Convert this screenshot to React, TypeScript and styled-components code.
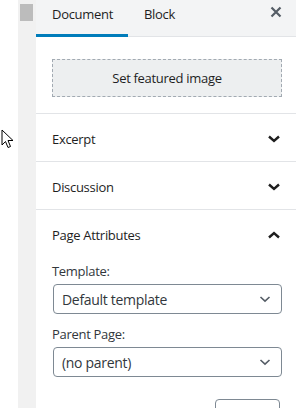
import React from "react";
import styled, { createGlobalStyle } from "styled-components";

const Global = createGlobalStyle`
  html, body { margin: 0; padding: 0; background: #fff; }
  body { width: 296px; height: 408px; overflow: hidden; font-family: "Open Sans", "Noto Sans", sans-serif; color: #1e1e1e; }
  * { box-sizing: border-box; }
`;

const Page = styled.div`
  display: flex;
  width: 296px;
  height: 408px;
  overflow: hidden;
  position: relative;
`;

const Gutter = styled.div`
  width: 18px;
  flex: none;
  background: #fff;
`;

const Strip = styled.div`
  width: 18px;
  flex: none;
  background: #f1f1f1;
  padding: 4px 3px 0 2px;
`;

const Thumb = styled.div`
  width: 13px;
  height: 17px;
  background: #bcbcbc;
`;

const Panel = styled.div`
  flex: 1;
  display: flex;
  flex-direction: column;
  background: #fff;
  min-width: 0;
`;

const Header = styled.div`
  height: 37px;
  flex: none;
  display: flex;
  align-items: stretch;
  background: #f3f4f5;
  border-bottom: 1px solid #e2e4e7;
`;

const Tab = styled.div<{ $active?: boolean }>`
  display: flex;
  align-items: center;
  padding: 0 15px 6px 16px;
  width: ${(p) => (p.$active ? "92px" : "auto")};
  font-size: 13px;
  color: #1e1e1e;
  border-bottom: 3px solid ${(p) => (p.$active ? "#007cba" : "transparent")};
  margin-bottom: -1px;
  letter-spacing: -0.3px;
`;

const Spacer = styled.div`
  flex: 1;
`;

const Close = styled.div`
  width: 38px;
  display: flex;
  align-items: center;
  justify-content: center;
  padding: 0 2px 12px 0;
`;

const Section = styled.div`
  border-bottom: 1px solid #e2e4e7;
`;

const FeaturedBody = styled.div`
  padding: 22px 14px 16px 16px;
`;

const DashedButton = styled.div`
  height: 38px;
  border: 1px dashed #a2aab2;
  background: #edeff0;
  display: flex;
  align-items: center;
  justify-content: center;
  font-size: 13px;
  letter-spacing: -0.3px;
  color: #1e1e1e;
`;

const SectionHead = styled.div`
  height: 47px;
  display: flex;
  align-items: center;
  justify-content: space-between;
  padding: 2px 15px 0 16px;
  font-size: 13px;
  letter-spacing: -0.3px;
  color: #1e1e1e;
`;

const Body = styled.div`
  padding: 5px 14px 0 16px;
  display: flex;
  flex-direction: column;
`;

const Label = styled.div`
  font-size: 13px;
  letter-spacing: -0.3px;
  color: #32373c;
  line-height: 18px;
  margin-bottom: 4px;
`;

const Select = styled.div`
  height: 30px;
  border: 1px solid #7e8993;
  border-radius: 4px;
  margin-left: 1px;
  display: flex;
  align-items: center;
  justify-content: space-between;
  padding: 0 9px 0 8px;
  font-size: 14px;
  letter-spacing: -0.3px;
  color: #32373c;
  margin-bottom: 11px;
`;

const ButtonRow = styled.div`
  display: flex;
  justify-content: flex-end;
  padding-right: 2px;
  margin-top: 11px;
`;

const SmallButton = styled.div`
  width: 65px;
  height: 30px;
  border: 1px solid #7e8993;
  border-radius: 4px;
`;

const Cursor = styled.svg`
  position: absolute;
  left: 1px;
  top: 129px;
`;

const ChevronDown = ({ thin }: { thin?: boolean }) => (
  <svg width="14" height="10" viewBox="0 0 14 10">
    <path
      d={thin ? "M2.5 3 L7 7.2 L11.5 3" : "M2 2.5 L7 7 L12 2.5"}
      fill="none"
      stroke={thin ? "#555d66" : "#1e1e1e"}
      strokeWidth={thin ? 1.6 : 2.4}
    />
  </svg>
);

const ChevronUp = () => (
  <svg width="14" height="10" viewBox="0 0 14 10">
    <path d="M2 7.5 L7 3 L12 7.5" fill="none" stroke="#1e1e1e" strokeWidth={2.4} />
  </svg>
);

export default function App() {
  return (
    <>
      <Global />
      <Page>
        <Gutter />
        <Strip>
          <Thumb />
        </Strip>
        <Panel>
          <Header>
            <Tab $active>Document</Tab>
            <Tab>Block</Tab>
            <Spacer />
            <Close>
              <svg width="12" height="12" viewBox="0 0 12 12">
                <path d="M1.5 1.5 L10.5 10.5 M10.5 1.5 L1.5 10.5" stroke="#555d66" strokeWidth="2.2" />
              </svg>
            </Close>
          </Header>
          <Section>
            <FeaturedBody>
              <DashedButton>Set featured image</DashedButton>
            </FeaturedBody>
          </Section>
          <Section>
            <SectionHead>
              Excerpt
              <ChevronDown />
            </SectionHead>
          </Section>
          <Section>
            <SectionHead>
              Discussion
              <ChevronDown />
            </SectionHead>
          </Section>
          <div>
            <SectionHead>
              Page Attributes
              <ChevronUp />
            </SectionHead>
            <Body>
              <Label>Template:</Label>
              <Select>
                Default template
                <ChevronDown thin />
              </Select>
              <Label>Parent Page:</Label>
              <Select>
                (no parent)
                <ChevronDown thin />
              </Select>
              <ButtonRow>
                <SmallButton />
              </ButtonRow>
            </Body>
          </div>
        </Panel>
        <Cursor width="14" height="22" viewBox="0 0 14 22">
          <path d="M1 1 L1 16 L4.5 12.5 L7 18.5 L9.5 17.5 L7 11.5 L12 11.5 Z" fill="#fff" stroke="#000" strokeWidth="1" strokeLinejoin="round" />
        </Cursor>
      </Page>
    </>
  );
}
